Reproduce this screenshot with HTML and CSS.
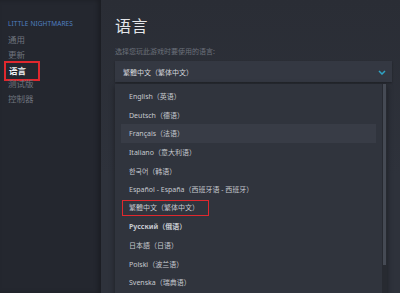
FILE: index.html
```html
<!DOCTYPE html>
<html lang="zh">
<head>
<meta charset="utf-8">
<link rel="stylesheet" href="styles.css">
</head>
<body>
<div class="app">
  <aside class="side">
    <div class="game">LITTLE NIGHTMARES</div>
    <ul class="nav">
      <li>通用</li>
      <li>更新</li>
      <li class="active"><span class="mark">语言</span></li>
      <li>测试版</li>
      <li>控制器</li>
    </ul>
  </aside>
  <main class="main">
    <h1 class="title">语言</h1>
    <div class="hint">选择您玩此游戏时要使用的语言:</div>
    <div class="select">
      <span>繁體中文（繁体中文）</span>
      <svg class="chev" width="8" height="5" viewBox="0 0 8 5"><path d="M1 1l3 3 3-3" fill="none" stroke="#2fa3c4" stroke-width="1.5"/></svg>
    </div>
    <div class="list">
      <div class="items">
        <div class="item">English（英语）</div>
        <div class="item">Deutsch（德语）</div>
        <div class="item hover">Français（法语）</div>
        <div class="item">Italiano（意大利语）</div>
        <div class="item">한국어（韩语）</div>
        <div class="item">Español - España（西班牙语 - 西班牙）</div>
        <div class="item"><span class="mark2">繁體中文（繁体中文）</span></div>
        <div class="item bold">Русский（俄语）</div>
        <div class="item">日本語（日语）</div>
        <div class="item">Polski（波兰语）</div>
        <div class="item">Svenska（瑞典语）</div>
      </div>
      <div class="scroll"><div class="thumb"></div></div>
    </div>
  </main>
</div>
</body>
</html>
```
FILE: styles.css
```css
* { box-sizing: border-box; margin: 0; padding: 0; }
html, body { width: 400px; height: 293px; overflow: hidden; }
body {
  font-family: "Noto Sans", "Noto Sans CJK SC", sans-serif;
  background: #23262e;
  color: #b8bcc4;
}
.app { display: flex; height: 293px; }
.side {
  width: 101px;
  flex: none;
  background: #24272f;
  padding: 19px 0 0 8px;
  box-shadow: inset -3px 0 4px rgba(0,0,0,0.25);
}
.game {
  font-size: 6.5px;
  color: #4f7fc1;
  letter-spacing: 0.1px;
  line-height: 9px;
}
.nav { list-style: none; margin-top: 5px; }
.nav li {
  font-size: 8.5px;
  line-height: 14.8px;
  height: 14.8px;
  color: #6f747e;
}
.nav li.active { color: #f2f3f5; font-weight: bold; }
.mark {
  display: inline-block;
  margin: -2px 0 -2px -4px;
  padding: 1px 12px 1px 3px;
  border: 2px solid #e0282e;
  line-height: 14px;
}
.main {
  flex: 1;
  background: linear-gradient(180deg, #2a2d35 0%, #2e323b 60%, #2e323b 100%);
  padding: 17px 8px 0 14px;
}
.title {
  font-size: 16px;
  font-weight: normal;
  color: #e4e6ea;
  line-height: 19px;
  letter-spacing: 0.5px;
}
.hint {
  font-size: 7px;
  color: #6c717b;
  margin-top: 11px;
  line-height: 10px;
}
.select {
  margin-top: 4px;
  height: 21px;
  background: #343842;
  display: flex;
  align-items: center;
  justify-content: space-between;
  padding: 0 6px 0 8px;
  font-size: 7px;
  color: #d4d7dc;
  box-shadow: 0 1px 2px rgba(0,0,0,0.3);
}
.chev { margin-top: 1px; }
.list {
  margin-top: 2px;
  margin-right: 5px;
  height: 220px;
  background: #30343d;
  display: flex;
  box-shadow: 0 2px 6px rgba(0,0,0,0.4);
}
.items { flex: 1; padding: 3px 0 0 6px; }
.item {
  height: 18.6px;
  display: flex;
  align-items: center;
  padding-left: 8px;
  font-size: 7px;
  color: #c6c9cf;
  margin-right: 6px;
}
.item.hover { background: #383c46; }
.item.bold { font-weight: bold; }
.mark2 {
  margin-left: -7px;
  padding: 2px 9px 2px 6px;
  border: 1.5px solid #e0282e;
  line-height: 10px;
}
.scroll {
  width: 5px;
  background: #272a31;
  flex: none;
}
.thumb {
  height: 181px;
  width: 3px;
  margin-left: 1px;
  background: #454a54;
}
```
